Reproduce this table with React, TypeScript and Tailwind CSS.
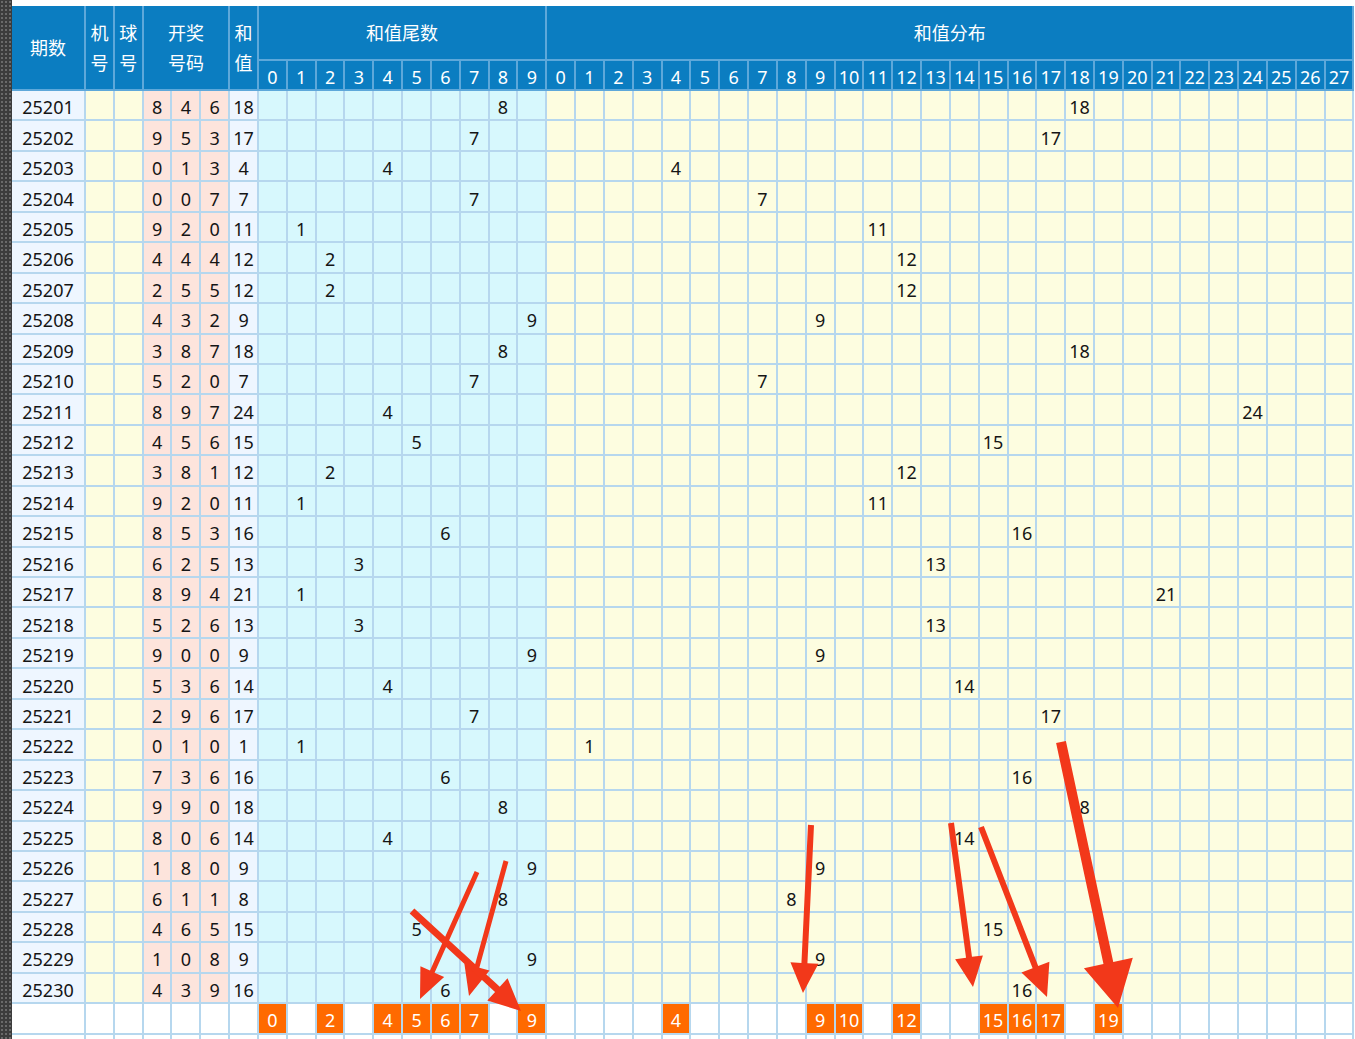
import React from "react"

const draws: [string, number, number, number][] = [
  ["25201", 8, 4, 6], ["25202", 9, 5, 3], ["25203", 0, 1, 3], ["25204", 0, 0, 7],
  ["25205", 9, 2, 0], ["25206", 4, 4, 4], ["25207", 2, 5, 5], ["25208", 4, 3, 2],
  ["25209", 3, 8, 7], ["25210", 5, 2, 0], ["25211", 8, 9, 7], ["25212", 4, 5, 6],
  ["25213", 3, 8, 1], ["25214", 9, 2, 0], ["25215", 8, 5, 3], ["25216", 6, 2, 5],
  ["25217", 8, 9, 4], ["25218", 5, 2, 6], ["25219", 9, 0, 0], ["25220", 5, 3, 6],
  ["25221", 2, 9, 6], ["25222", 0, 1, 0], ["25223", 7, 3, 6], ["25224", 9, 9, 0],
  ["25225", 8, 0, 6], ["25226", 1, 8, 0], ["25227", 6, 1, 1], ["25228", 4, 6, 5],
  ["25229", 1, 0, 8], ["25230", 4, 3, 9],
]

const tailHits = [0, 2, 4, 5, 6, 7, 9]
const sumHits = [4, 9, 10, 12, 15, 16, 17, 19]

// background per column (0 = 期数, 1-2 机/球号, 3-5 开奖, 6 和值, 7-16 尾数, 17-44 分布)
function bgFor(c: number) {
  if (c === 0 || c === 6) return "bg-[#eef6ff]"
  if (c <= 2) return "bg-[#fdfde0]"
  if (c <= 5) return "bg-[#fde4dc]"
  if (c <= 16) return "bg-[#d7f8fd]"
  return "bg-[#fdfde0]"
}

const cell = "flex items-center justify-center pt-[4px] border-r-2 border-b-2 border-[#b6d7ee]"
const head = "flex items-center justify-center border-r-2 border-b-2 border-[#5ea8da] bg-[#0b7dc1] text-white"

function Arrow({ x1, y1, x2, y2, w, len, hw }: { x1: number; y1: number; x2: number; y2: number; w: number; len: number; hw: number }) {
  const dx = x2 - x1
  const dy = y2 - y1
  const d = Math.hypot(dx, dy)
  const ux = dx / d
  const uy = dy / d
  const nx = -uy
  const ny = ux
  const bx = x2 - ux * len
  const by = y2 - uy * len
  const pts = [
    [x1 + (nx * w) / 2, y1 + (ny * w) / 2],
    [bx + (nx * w) / 2, by + (ny * w) / 2],
    [bx + (nx * hw) / 2, by + (ny * hw) / 2],
    [x2, y2],
    [bx - (nx * hw) / 2, by - (ny * hw) / 2],
    [bx - (nx * w) / 2, by - (ny * w) / 2],
    [x1 - (nx * w) / 2, y1 - (ny * w) / 2],
  ]
  return <polygon points={pts.map((p) => p.join(",")).join(" ")} fill="#f2381a" />
}

export default function App() {
  return (
    <div className="relative w-[1355px] h-[1039px] overflow-hidden bg-white flex font-['Noto_Sans','Noto_Sans_CJK_SC',sans-serif]">
      <div className="w-[12px] shrink-0 bg-[#3c3c3c] bg-[radial-gradient(#6a6a6a_1px,transparent_1px)] bg-[length:4px_4px]" />
      <div className="pt-[6px] overflow-hidden">
        <div className="grid grid-cols-[74px_repeat(44,28.83px)] grid-rows-[55px_30px] auto-rows-[30.45px] text-[18px] leading-none text-[#151515]">
          {/* header */}
          <div className={`${head} row-span-2 col-start-1 row-start-1`}>期数</div>
          <div className={`${head} row-span-2 col-start-2 row-start-1 flex-col leading-[30px]`}>
            <span>机</span>
            <span>号</span>
          </div>
          <div className={`${head} row-span-2 col-start-3 row-start-1 flex-col leading-[30px]`}>
            <span>球</span>
            <span>号</span>
          </div>
          <div className={`${head} row-span-2 col-start-4 col-span-3 row-start-1 flex-col leading-[30px]`}>
            <span>开奖</span>
            <span>号码</span>
          </div>
          <div className={`${head} row-span-2 col-start-7 row-start-1 flex-col leading-[30px]`}>
            <span>和</span>
            <span>值</span>
          </div>
          <div className={`${head} col-start-8 col-span-10 row-start-1`}>和值尾数</div>
          <div className={`${head} col-start-18 col-span-28 row-start-1`}>和值分布</div>
          {Array.from({ length: 10 }, (_, i) => (
            <div key={"t" + i} className={`${head} pt-[4px]`}>{i}</div>
          ))}
          {Array.from({ length: 28 }, (_, i) => (
            <div key={"s" + i} className={`${head} pt-[4px]`}>{i}</div>
          ))}

          {/* data rows */}
          {draws.map(([no, a, b, c]) => {
            const sum = a + b + c
            const vals: (string | number)[] = [no, "", "", a, b, c, sum]
            return (
              <React.Fragment key={no}>
                {Array.from({ length: 45 }, (_, col) => {
                  let v: string | number = ""
                  if (col < 7) v = vals[col]
                  else if (col <= 16) v = col - 7 === sum % 10 ? sum % 10 : ""
                  else v = col - 17 === sum ? sum : ""
                  return (
                    <div key={col} className={`${cell} ${bgFor(col)}`}>{v}</div>
                  )
                })}
              </React.Fragment>
            )
          })}

          {/* hit summary row */}
          {Array.from({ length: 45 }, (_, col) => {
            let hit: number | null = null
            if (col >= 7 && col <= 16 && tailHits.includes(col - 7)) hit = col - 7
            if (col >= 17 && sumHits.includes(col - 17)) hit = col - 17
            return hit === null ? (
              <div key={"h" + col} className={`${cell} bg-white`} />
            ) : (
              <div key={"h" + col} className={`${cell} bg-[#ff6a00] text-white`}>{hit}</div>
            )
          })}
          {Array.from({ length: 45 }, (_, col) => (
            <div key={"e" + col} className={`${cell} bg-white`} />
          ))}
        </div>
      </div>

      <svg className="absolute left-0 top-0 pointer-events-none" width="1355" height="1039" viewBox="0 0 1355 1039">
        <Arrow x1={477} y1={872} x2={420} y2={999} w={5} len={30} hw={26} />
        <Arrow x1={506} y1={861} x2={469} y2={996} w={5} len={30} hw={26} />
        <Arrow x1={412} y1={911} x2={521} y2={1011} w={7} len={32} hw={30} />
        <Arrow x1={811} y1={825} x2={803} y2={993} w={6} len={30} hw={28} />
        <Arrow x1={951} y1={823} x2={973} y2={987} w={6} len={30} hw={28} />
        <Arrow x1={981} y1={827} x2={1047} y2={997} w={6} len={32} hw={30} />
        <Arrow x1={1061} y1={742} x2={1118} y2={1008} w={10} len={46} hw={50} />
      </svg>
    </div>
  )
}
